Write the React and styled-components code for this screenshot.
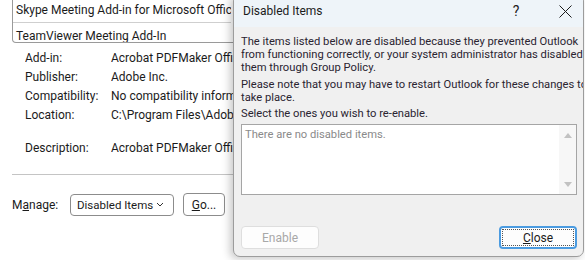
import React from 'react';
import styled, { createGlobalStyle } from 'styled-components';

const Global = createGlobalStyle`
  html, body { margin: 0; padding: 0; background: #ffffff; }
  body { font-family: Roboto, "Noto Sans", sans-serif; font-size: 12px; color: #1b1b1b; }
`;

const Page = styled.div`
  position: relative;
  width: 585px;
  height: 260px;
  overflow: hidden;
  background: #ffffff;
`;

const Addins = styled.div`
  display: flex;
  flex-direction: column;
  padding-left: 12px;
`;

const AddinList = styled.div`
  width: 260px;
  border: 1px solid #9a9a9a;
  border-top: none;
  border-radius: 0 0 4px 4px;
  display: flex;
  flex-direction: column;
`;

const AddinItem = styled.div`
  width: 218px;
  overflow: hidden;
  height: ${p => p.h}px;
  box-sizing: border-box;
  padding: ${p => p.pt}px 0 0 3px;
  white-space: nowrap;
  border-bottom: ${p => (p.sep ? '1px solid #cfcfcf' : 'none')};
`;

const Details = styled.div`
  display: grid;
  grid-template-columns: 86px 122px;
  padding: 6px 0 0 13px;
`;

const Label = styled.div`
  height: ${p => p.h || 19}px;
  line-height: 19px;
  white-space: nowrap;
  overflow: hidden;
`;

const Value = styled(Label)``;

const Rule = styled.div`
  margin-top: 16px;
  width: 240px;
  height: 1px;
  background: #c4c4c4;
`;

const ManageRow = styled.div`
  display: flex;
  align-items: center;
  margin-top: 18px;
`;

const ManageLabel = styled.span`
  width: 58px;
`;

const Select = styled.div`
  width: 104px;
  height: 22px;
  box-sizing: border-box;
  border: 1px solid #8c8c8c;
  border-radius: 4px;
  display: flex;
  align-items: center;
  justify-content: space-between;
  padding: 0 9px 0 6px;
  font-size: 11.5px;
  white-space: nowrap;
`;

const GoButton = styled.div`
  margin-left: 9px;
  width: 42px;
  height: 23px;
  box-sizing: border-box;
  border: 1px solid #8c8c8c;
  border-radius: 4px;
  display: flex;
  align-items: center;
  justify-content: center;
`;

const Dialog = styled.div`
  position: absolute;
  left: 233px;
  top: -6px;
  width: 351px;
  height: 263px;
  box-sizing: border-box;
  border: 1px solid #9c9c9c;
  border-radius: 7px;
  background: #f0f0f0;
  box-shadow: -3px 2px 9px rgba(0, 0, 0, 0.22);
  overflow: hidden;
  display: flex;
  flex-direction: column;
  color: #2a2431;
`;

const TitleBar = styled.div`
  height: 32px;
  flex-shrink: 0;
  box-sizing: border-box;
  padding: 0 0 0 9px;
  background: #eef4f9;
  display: flex;
  align-items: center;
  color: #1b1b1b;
`;

const Title = styled.span`
  flex: 1;
`;

const TitleIcon = styled.span`
  width: ${p => p.w}px;
  margin-right: ${p => p.mr || 0}px;
  display: flex;
  justify-content: center;
  font-size: 14px;
`;

const Body = styled.div`
  flex: 1;
  display: flex;
  flex-direction: column;
  padding: 8px 6px 6px 7px;
`;

const Para = styled.p`
  margin: 0 0 3.5px 0;
  font-size: 11.2px;
  line-height: 13px;
  white-space: nowrap;
`;

const ListBox = styled.div`
  height: 71px;
  box-sizing: border-box;
  border: 1px solid #a5a5a5;
  background: #ffffff;
  display: flex;
`;

const Placeholder = styled.div`
  flex: 1;
  padding: 3px 0 0 3px;
  font-size: 11.2px;
  color: #8a8a8a;
`;

const ScrollBar = styled.div`
  width: 17px;
  background: #f7f7f7;
  display: flex;
  flex-direction: column;
  justify-content: space-between;
  align-items: center;
  padding: 8px 0 7px;
`;

const Arrow = styled.div`
  width: 0;
  height: 0;
  border-left: 4px solid transparent;
  border-right: 4px solid transparent;
  ${p => (p.down ? 'border-top: 5px solid #c2c2c2;' : 'border-bottom: 5px solid #c2c2c2;')}
`;

const Buttons = styled.div`
  margin-top: auto;
  display: flex;
  justify-content: space-between;
  padding-bottom: 1px;
`;

const Button = styled.div`
  width: 78px;
  height: 23px;
  box-sizing: border-box;
  border-radius: 4px;
  background: #fdfdfd;
  display: flex;
  align-items: center;
  justify-content: center;
  border: ${p => (p.primary ? '2px solid #4b9be0' : '1px solid #dedede')};
  color: ${p => (p.disabled ? '#a8a8a8' : '#1b1b1b')};
  padding: 1px;
`;

const Focus = styled.div`
  width: 100%;
  height: 100%;
  box-sizing: border-box;
  border: 1px dotted #555;
  display: flex;
  align-items: center;
  justify-content: center;
`;

export default function App() {
  return (
    <Page>
      <Global />
      <Addins>
        <AddinList>
          <AddinItem h={23} pt={3} sep>Skype Meeting Add-in for Microsoft Office</AddinItem>
          <AddinItem h={19} pt={6}>TeamViewer Meeting Add-In</AddinItem>
        </AddinList>
        <Details>
          <Label>Add-in:</Label>
          <Value>Acrobat PDFMaker Office COM Addin</Value>
          <Label>Publisher:</Label>
          <Value>Adobe Inc.</Value>
          <Label>Compatibility:</Label>
          <Value>No compatibility information available</Value>
          <Label h={33}>Location:</Label>
          <Value h={33}>C:\Program Files\Adobe\Acrobat</Value>
          <Label>Description:</Label>
          <Value>Acrobat PDFMaker Office COM Addin</Value>
        </Details>
        <Rule />
        <ManageRow>
          <ManageLabel>M<u>a</u>nage:</ManageLabel>
          <Select>
            <span>Disabled Items</span>
            <svg width="8" height="5" viewBox="0 0 8 5">
              <path d="M1 1l3 3 3-3" fill="none" stroke="#333" strokeWidth="1" />
            </svg>
          </Select>
          <GoButton><span><u>G</u>o...</span></GoButton>
        </ManageRow>
      </Addins>

      <Dialog>
        <TitleBar>
          <Title>Disabled Items</Title>
          <TitleIcon w={16} mr={23}>?</TitleIcon>
          <TitleIcon w={36}>
            <svg width="13" height="13" viewBox="0 0 13 13">
              <path d="M0.5 0.5l12 12M12.5 0.5l-12 12" stroke="#1b1b1b" strokeWidth="1" />
            </svg>
          </TitleIcon>
        </TitleBar>
        <Body>
          <Para>
            The items listed below are disabled because they prevented Outlook<br />
            from functioning correctly, or your system administrator has disabled<br />
            them through Group Policy.
          </Para>
          <Para>
            Please note that you may have to restart Outlook for these changes to<br />
            take place.
          </Para>
          <Para>Select the ones you wish to re-enable.</Para>
          <ListBox>
            <Placeholder>There are no disabled items.</Placeholder>
            <ScrollBar>
              <Arrow />
              <Arrow down />
            </ScrollBar>
          </ListBox>
          <Buttons>
            <Button disabled>Enable</Button>
            <Button primary>
              <Focus><span><u>C</u>lose</span></Focus>
            </Button>
          </Buttons>
        </Body>
      </Dialog>
    </Page>
  );
}
